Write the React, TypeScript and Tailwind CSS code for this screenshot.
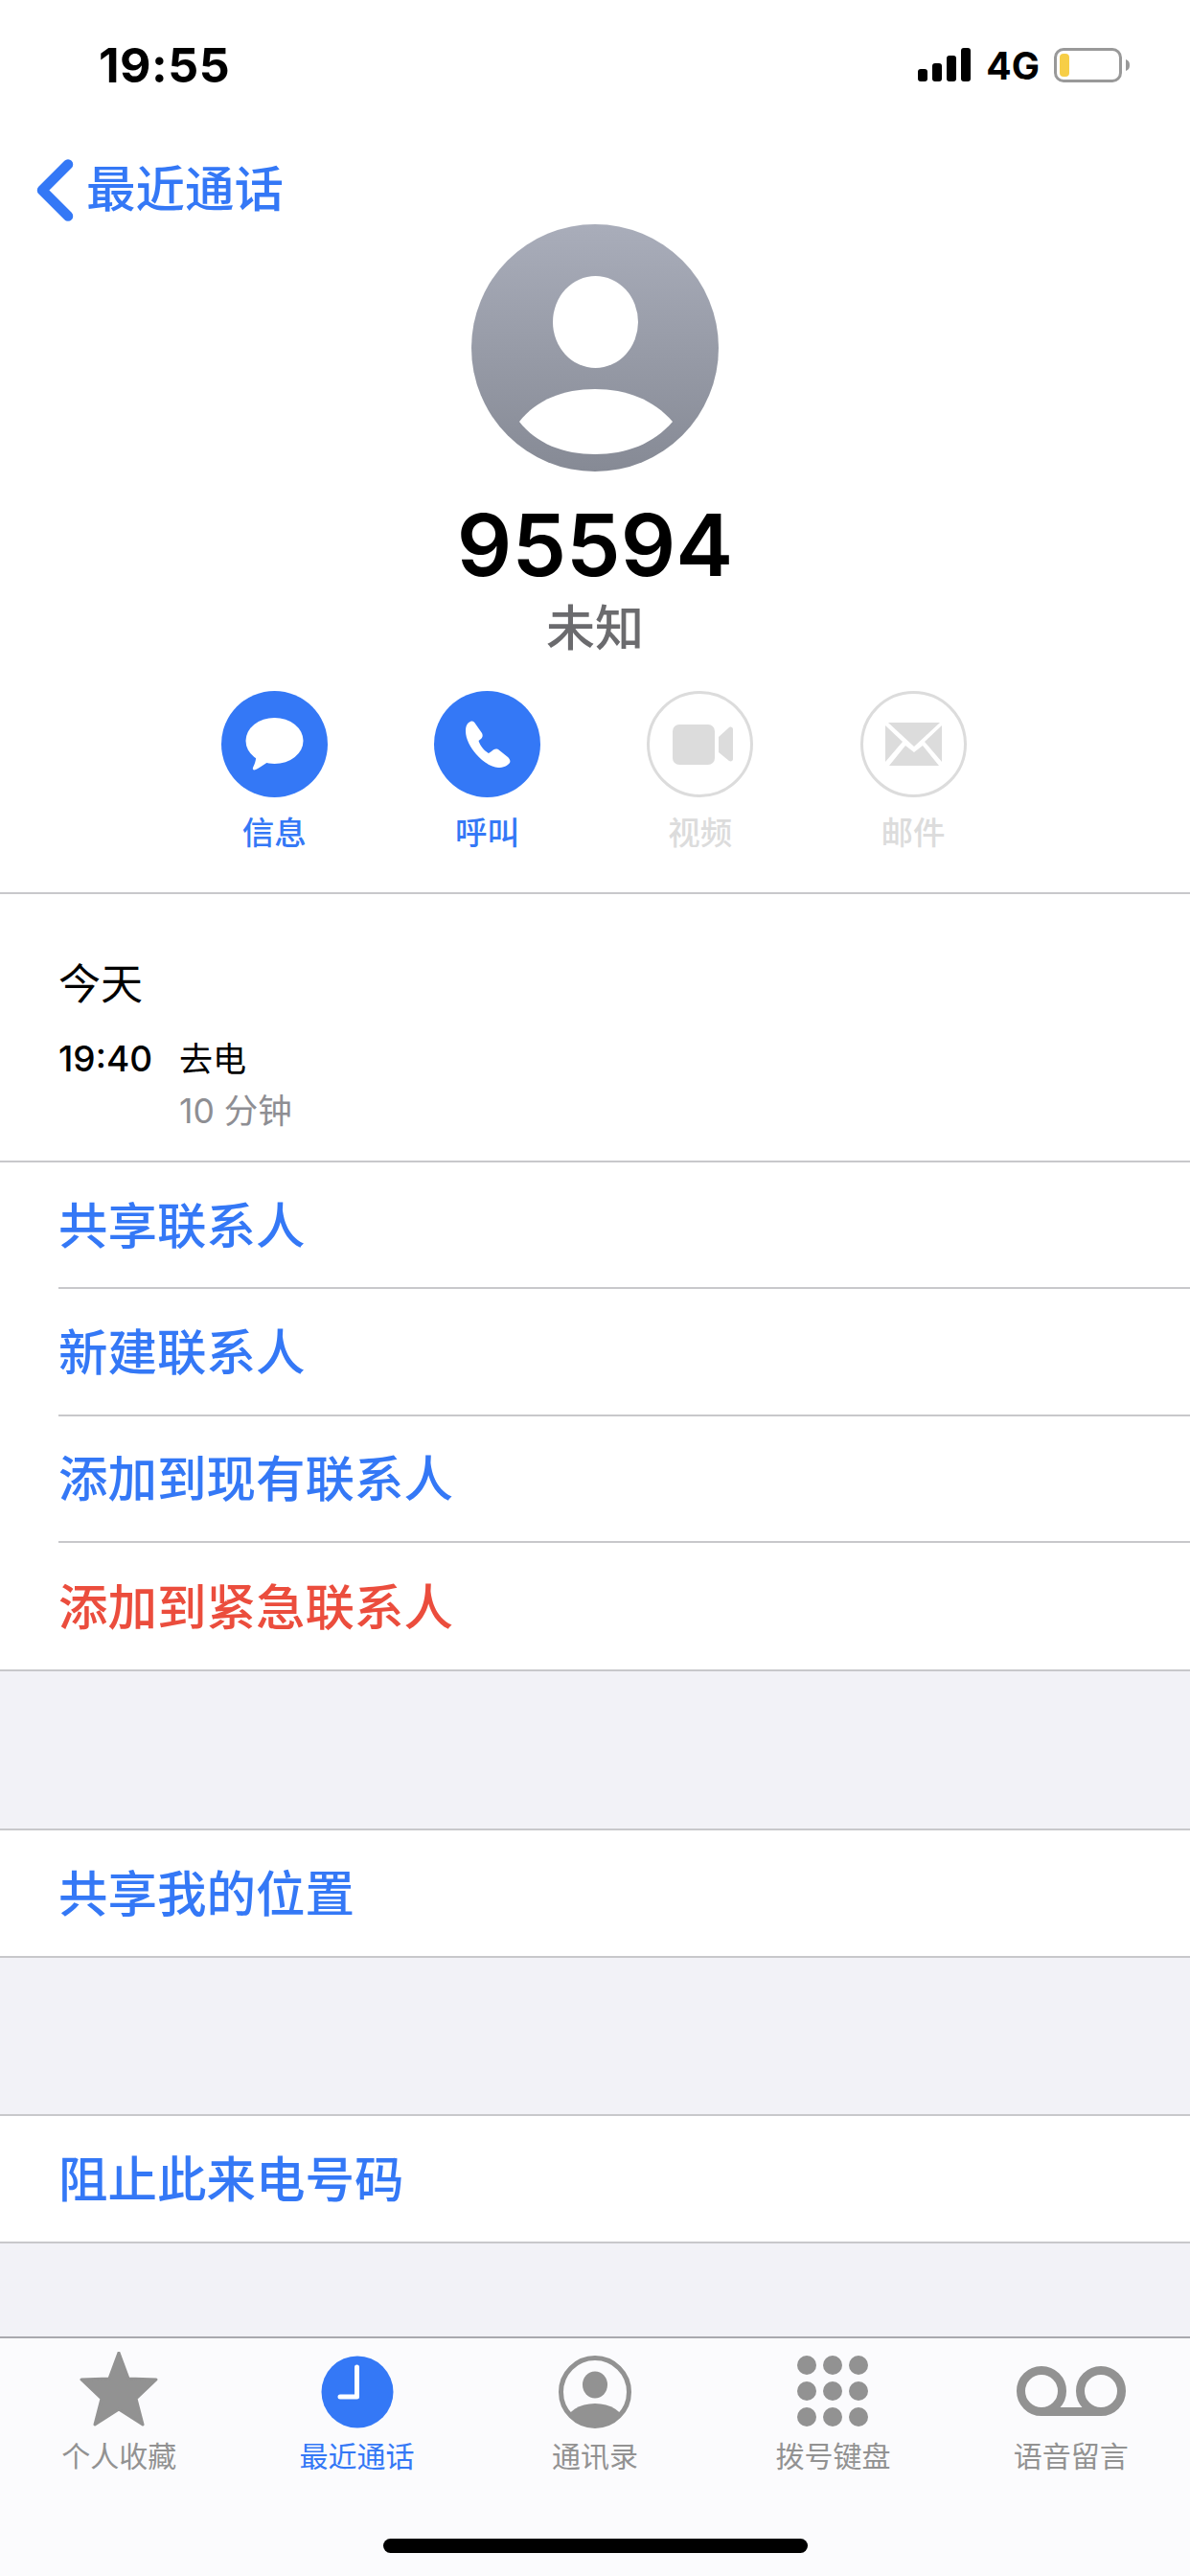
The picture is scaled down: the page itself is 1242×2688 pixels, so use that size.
import React from "react";

const BLUE = "#3478f6";

function Row({ text, red, inset, last, compact }: { text: string; red?: boolean; inset?: boolean; last?: boolean; compact?: boolean }) {
  return (
    <div className={inset ? "pl-[61px]" : ""}>
      <div className={`flex items-center pt-[3px] text-[51.5px] leading-none font-medium ${compact ? "h-[131px]" : "h-[132.25px]"} ${red ? "text-[#eb4d3d]" : "text-[#3478f6]"} ${last ? "" : "border-b-2 border-[#c8c8cb]"} ${inset ? "" : "pl-[61px]"}`}>
        {text}
      </div>
    </div>
  );
}

function Action({ label, active, children }: { label: string; active?: boolean; children: React.ReactNode }) {
  return (
    <div className="flex w-[222.3px] flex-col items-center">
      <div className="h-[111px] w-[111px]">{children}</div>
      <div className={`mt-[14px] text-[33.5px] leading-[46px] font-medium ${active ? "text-[#3478f6]" : "text-[#dcdcdc]"}`}>{label}</div>
    </div>
  );
}

function Tab({ label, active, children }: { label: string; active?: boolean; children: React.ReactNode }) {
  return (
    <div className="flex flex-1 flex-col items-center">
      <div className="flex h-[89px] w-full items-start justify-center">{children}</div>
      <div className={`text-[30px] leading-[40px] ${active ? "text-[#3478f6]" : "text-[#929292]"}`}>{label}</div>
    </div>
  );
}

export default function App() {
  return (
    <div className="flex h-[2688px] w-[1242px] flex-col overflow-hidden bg-[#f2f2f7] font-[family-name:Inter,'Noto_Sans_CJK_SC',sans-serif] text-black">
      <div className="bg-white pb-[39px]">
        {/* status bar */}
        <div className="flex h-[136px] items-center justify-between pl-[103px] pr-[59px]">
          <span className="text-[50px] leading-none font-bold tracking-[0.5px]">19:55</span>
          <div className="flex items-center">
            <svg width="56" height="36" viewBox="0 0 56 36" className="mr-[15px]">
              <rect x="0" y="22" width="10" height="13" rx="3" fill="#000" />
              <rect x="15" y="16" width="10" height="19" rx="3" fill="#000" />
              <rect x="30" y="8" width="10" height="27" rx="3" fill="#000" />
              <rect x="45" y="0" width="10" height="35" rx="3" fill="#000" />
            </svg>
            <span className="mr-[15px] text-[39px] leading-none font-bold">4G</span>
            <div className="h-[36px] w-[71px] rounded-[10px] border-[3px] border-[#999999] p-[3px]">
              <div className="h-full w-[10px] rounded-[4px] bg-[#f7ce46]" />
            </div>
            <svg width="8" height="12" viewBox="0 0 8 12" className="ml-[4px]">
              <path d="M0 0 C3 1 4 3 4 6 C4 9 3 11 0 12 Z" fill="#999999" />
            </svg>
          </div>
        </div>

        {/* back */}
        <div className="flex h-[98px] items-center pl-[38px] pt-[26px] text-[#3478f6]">
          <svg width="39" height="65" viewBox="0 0 39 65">
            <path d="M33 5.5 L6 32.5 L33 59.5" fill="none" stroke={BLUE} strokeWidth="10.5" strokeLinecap="round" strokeLinejoin="round" />
          </svg>
          <span className="ml-[13px] text-[51.5px] leading-none font-medium">最近通话</span>
        </div>

        {/* avatar */}
        <div className="flex justify-center">
          <svg width="258" height="258" viewBox="0 0 258 258">
            <defs>
              <linearGradient id="av" x1="0" y1="0" x2="0" y2="1">
                <stop offset="0" stopColor="#a9adba" />
                <stop offset="1" stopColor="#868a95" />
              </linearGradient>
            </defs>
            <circle cx="129" cy="129" r="129" fill="url(#av)" />
            <ellipse cx="129.5" cy="102" rx="44.5" ry="48" fill="#fff" />
            <path d="M50 206 C68 183 96 172 129 172 C162 172 190 183 210 206 C190 229 162 240 129 240 C96 240 68 229 50 206 Z" fill="#fff" />
          </svg>
        </div>

        <div className="mt-[17px] text-center text-[90px] leading-[120px] font-semibold">95594</div>
        <div className="-mt-[8px] text-center text-[51px] leading-[70px] font-medium text-[#6b6b6e]">未知</div>

        {/* actions */}
        <div className="mt-[30px] flex pl-[175px]">
          <Action label="信息" active>
            <svg viewBox="0 0 111 111" width="111" height="111">
              <circle cx="55.5" cy="55.5" r="55.5" fill={BLUE} />
              <ellipse cx="55.5" cy="52" rx="30" ry="24" fill="#fff" />
              <path d="M36 66 C37 72 34 78 33 80 C32 83 35 83 38 81 C42 79 45 76 49 74 Z" fill="#fff" />
            </svg>
          </Action>
          <Action label="呼叫" active>
            <svg viewBox="0 0 111 111" width="111" height="111">
              <circle cx="55.5" cy="55.5" r="55.5" fill={BLUE} />
              <path d="M33 42 C33 36 35 33 38 32 C40 31 42 32 43 34 L50 44 C51 46 51 48 49 50 L46.5 52 C48 57 52 62 57 65 L60 63 C62 61 64 60 67 61 L77 69 C79 71 80 73 79 75 C77 78 72 80 67 80 C58 79 50 73 44 66 C38 59 33 50 33 42 Z" fill="#fff" />
            </svg>
          </Action>
          <Action label="视频">
            <svg viewBox="0 0 111 111" width="111" height="111">
              <circle cx="55.5" cy="55.5" r="54" fill="none" stroke="#dcdcdc" strokeWidth="3" />
              <rect x="27" y="35" width="44" height="42" rx="7" fill="#dcdcdc" />
              <path d="M75 48 L86 38 C88 37 90 38 90 40 L90 71 C90 73 88 74 86 73 L75 64 Z" fill="#dcdcdc" />
            </svg>
          </Action>
          <Action label="邮件">
            <svg viewBox="0 0 111 111" width="111" height="111">
              <circle cx="55.5" cy="55.5" r="54" fill="none" stroke="#dcdcdc" strokeWidth="3" />
              <path d="M29 33 L83 33 L56 58 Z" fill="#dcdcdc" />
              <path d="M26 36 L26 74 L44 53 Z" fill="#dcdcdc" />
              <path d="M85 36 L85 74 L67 53 Z" fill="#dcdcdc" />
              <path d="M30 78 L47 57 L56 64 L65 57 L82 78 Z" fill="#dcdcdc" />
            </svg>
          </Action>
        </div>
      </div>

      {/* recents */}
      <div className="h-[282px] border-y-2 border-[#c8c8cb] bg-white pl-[61px]">
        <div className="pt-[64px] text-[44px] leading-[60px]">今天</div>
        <div className="mt-[24px] flex items-center text-[35px] leading-[48px]">
          <span className="w-[126px] text-[37px] font-medium">19:40</span>
          <span>去电</span>
        </div>
        <div className="mt-[7px] pl-[126px] text-[35.5px] leading-[48px] text-[#8e8e93]">10 分钟</div>
      </div>

      <div className="bg-white">
        <Row text="共享联系人" inset />
        <Row text="新建联系人" inset />
        <Row text="添加到现有联系人" inset />
        <Row text="添加到紧急联系人" red last />
      </div>

      <div className="border-t-2 border-[#c8c8cb]" />
      <div className="h-[164px]" />
      <div className="border-y-2 border-[#c8c8cb] bg-white">
        <Row text="共享我的位置" last compact />
      </div>
      <div className="h-[163px]" />
      <div className="border-y-2 border-[#c8c8cb] bg-white">
        <Row text="阻止此来电号码" last compact />
      </div>

      <div className="flex-1" />

      {/* tab bar */}
      <div className="flex h-[250px] flex-col border-t-2 border-[#a9a9ae] bg-[#fbfbfd]">
        <div className="flex pt-[14px]">
          <Tab label="个人收藏">
            <svg width="84" height="80" viewBox="0 0 84 80">
              <path d="M42 1 L52 28 L81 29 L60 49 L67 76 L42 60 L17 76 L24 49 L3 29 L32 28 Z" fill="#929292" stroke="#929292" strokeWidth="3" strokeLinejoin="round" />
            </svg>
          </Tab>
          <Tab label="最近通话" active>
            <svg width="76" height="82" viewBox="0 0 76 82">
              <circle cx="38" cy="42" r="37.5" fill={BLUE} />
              <path d="M37.5 16 L37.5 47 L20 47" fill="none" stroke="#fff" strokeWidth="5" strokeLinecap="round" strokeLinejoin="round" />
            </svg>
          </Tab>
          <Tab label="通讯录">
            <svg width="78" height="82" viewBox="0 0 78 82">
              <defs>
                <clipPath id="pc"><circle cx="39" cy="42" r="36" /></clipPath>
              </defs>
              <circle cx="39" cy="42" r="35.5" fill="none" stroke="#929292" strokeWidth="5" />
              <ellipse cx="39" cy="34.5" rx="13" ry="14" fill="#929292" />
              <ellipse cx="39" cy="74" rx="30" ry="20" fill="#929292" clipPath="url(#pc)" />
            </svg>
          </Tab>
          <Tab label="拨号键盘">
            <svg width="76" height="82" viewBox="0 0 76 82">
              {[11, 38, 65].flatMap((x) =>
                [14, 41, 68].map((y) => <circle key={`${x}-${y}`} cx={x} cy={y} r="10" fill="#929292" />)
              )}
            </svg>
          </Tab>
          <Tab label="语音留言">
            <svg width="114" height="82" viewBox="0 0 114 82" className="mt-[1px]">
              <circle cx="26" cy="40" r="21.5" fill="none" stroke="#929292" strokeWidth="9" />
              <circle cx="88" cy="40" r="21.5" fill="none" stroke="#929292" strokeWidth="9" />
              <path d="M26 61.5 L88 61.5" stroke="#929292" strokeWidth="9" />
            </svg>
          </Tab>
        </div>
        <div className="mt-[66px] flex justify-center">
          <div className="h-[15px] w-[443px] rounded-full bg-black" />
        </div>
      </div>
    </div>
  );
}
